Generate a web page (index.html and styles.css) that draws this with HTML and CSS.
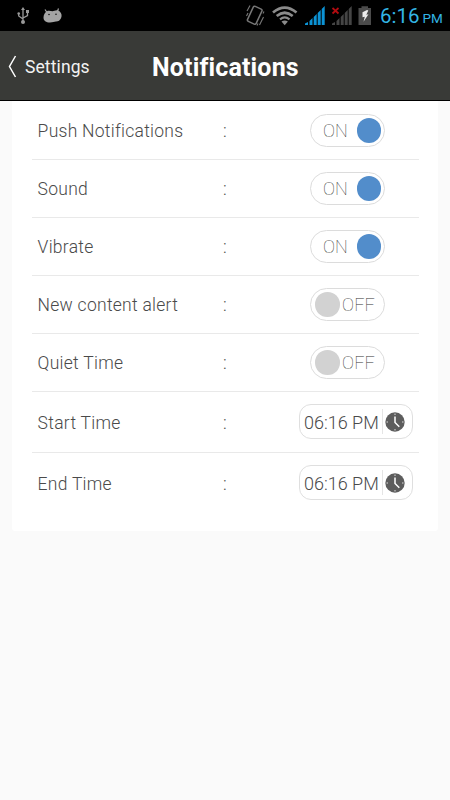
FILE: index.html
```html
<!DOCTYPE html>
<html lang="en">
<head>
<meta charset="utf-8">
<title>Notifications</title>
<link rel="stylesheet" href="styles.css">
</head>
<body>
<div class="status">
  <svg class="status-icons" width="380" height="31" viewBox="0 0 380 31">
    <g fill="none" stroke="#999" stroke-width="1.3">
      <path d="M23 9v13M18.7 13v3l4.3 3M27.5 11v4.500L23 18"/>
    </g>
    <g fill="#999"><path d="M23 7l2 3h-4z"/><circle cx="23" cy="22" r="2"/><circle cx="18.700" cy="13.500" r="1.300"/><path d="M26 10h3v3h-3z"/></g>
    <path d="M45 9.500l2 3M58.500 8.500l-1.500 4" stroke="#a4a4a4" stroke-width="1.200"/>
    <path d="M47 11.200c2-1 4 0 5.500 0s4.500-2 7 0 2.500 5 1.500 7-2.500 3.300-5 3.300c-2 0-3 1-6 1-4 0-6.500-1.500-6.500-5 0-3 1.500-5.300 3.500-6.300z" fill="#a4a4a4"/>
    <circle cx="49" cy="14.500" r=".8" fill="#111"/><circle cx="56" cy="14.200" r=".8" fill="#111"/>
    <g fill="none" stroke="#777">
      <rect x="250" y="7" width="9.500" height="16.500" rx="1.500" stroke-width="1.500" transform="rotate(25 254.700 15.200)"/>
      <path d="M247 11l3-5.500M246.500 16l1.500-3M259.500 25l4-8M257 25.500l1-2M263 13.500l1-2" stroke-width="1.100"/>
    </g>
    <g fill="none" stroke="#8b8b8b" stroke-width="2.700">
      <path d="M273 12.500Q284.700 2.700 296.500 12.500"/>
      <path d="M276.700 16Q284.700 9.500 292.700 16"/>
      <path d="M280 19.300Q284.700 15.500 289.500 19.300" stroke-width="2.200"/>
    </g>
    <path d="M281.500 21.500q3.200-2.200 6.400 0l-3.200 3.700z" fill="#8b8b8b"/>
    <path fill="#0c93d5" d="M305 25v-1.500l3-1.500v3zM309.500 25v-4l3-3v7zM313.700 25v-8l3-3v11zM317.700 25V13l3-3v15zM321.700 25V9l3-3v19z"/>
    <path fill="#454545" d="M332 25v-1.500l3-1.500v3zM336.500 25v-4l3-3v7zM340.700 25v-8l3-3v11zM344.700 25V13l3-3v15zM348.700 25V9l3-3v19z"/>
    <path d="M332.500 8l6 5.500M338.500 8l-6 5.500" stroke="#b30b10" stroke-width="1.700"/>
    <path fill="#4b4b4b" d="M358.500 8h3V6.300h6.500V8h3v17h-12.500z"/>
    <path fill="#eee" d="M367 10l-4.500 2.200v5l2.300-.4-1.300 5 5-7.500-2.200.4 2-4.200z"/>
  </svg>
  <div class="clock">6:16<span class="meridiem">PM</span></div>
</div>
<header class="header">
  <a class="back"><svg width="9" height="23" viewBox="0 0 9 23"><path d="M7.500 1L1.500 11.500L7.500 22" fill="none" stroke="#fff" stroke-width="1.500"/></svg><span class="back-text">Settings</span></a>
  <h1 class="title">Notifications</h1>
</header>
<main class="panel">
  <div class="row first"><span class="label">Push Notifications</span><span class="colon">:</span><div class="toggle"><span class="state">ON</span><i class="knob"></i></div></div>
  <div class="row"><span class="label">Sound</span><span class="colon">:</span><div class="toggle"><span class="state">ON</span><i class="knob"></i></div></div>
  <div class="row"><span class="label">Vibrate</span><span class="colon">:</span><div class="toggle"><span class="state">ON</span><i class="knob"></i></div></div>
  <div class="row"><span class="label">New content alert</span><span class="colon">:</span><div class="toggle off"><i class="knob"></i><span class="state">OFF</span></div></div>
  <div class="row"><span class="label">Quiet Time</span><span class="colon">:</span><div class="toggle off"><i class="knob"></i><span class="state">OFF</span></div></div>
  <div class="row tall"><span class="label">Start Time</span><span class="colon">:</span><div class="time"><span class="value">06:16 PM</span><svg class="dial" width="20" height="20" viewBox="0 0 20 20"><circle cx="10" cy="10" r="9.700" fill="#5d5d5d"/><path d="M10 4.500v6l4.300 4.300" fill="none" stroke="#fff" stroke-width="1.500"/><path d="M10 1.500v1.500M10 17v1.500M1.500 10H3M17 10h1.500" stroke="#ddd"/></svg></div></div>
  <div class="row tall last"><span class="label">End Time</span><span class="colon">:</span><div class="time"><span class="value">06:16 PM</span><svg class="dial" width="20" height="20" viewBox="0 0 20 20"><circle cx="10" cy="10" r="9.700" fill="#5d5d5d"/><path d="M10 4.500v6l4.300 4.300" fill="none" stroke="#fff" stroke-width="1.500"/><path d="M10 1.500v1.500M10 17v1.500M1.500 10H3M17 10h1.500" stroke="#ddd"/></svg></div></div>
</main>
</body>
</html>
```
FILE: styles.css
```css
* { box-sizing: border-box; }
body { margin: 0; width: 450px; height: 800px; overflow: hidden; background: #fafafa; font-family: Roboto, "Liberation Sans", sans-serif; }
.status { height: 31px; background: #000; display: flex; }
.status-icons { flex: none; display: block; }
.clock { color: #33b5e5; font-size: 20.5px; line-height: 32px; white-space: nowrap; letter-spacing: 0; }
.meridiem { font-size: 13.5px; margin-left: 3px; }
.header { height: 70px; background: #393a37; border-bottom: 1px solid #000; display: grid; grid-template-columns: 152px 1fr; align-items: center; color: #fff; }
.back { display: flex; align-items: center; padding-left: 8px; gap: 8px; margin-top: 1px; }
.back-text { font-size: 17.5px; letter-spacing: .1px; line-height: 24px; color: #f2f2f2; padding-top: 2px; }
.title { margin: 5px 0 0; font-size: 25px; line-height: 30px; font-weight: 700; letter-spacing: .15px; }
.panel { width: 426px; height: 430px; margin-left: 12px; padding: 0 19px 0 20px; background: #fff; border-radius: 0 0 3px 3px; }
.row { height: 58px; padding-top: 12px; border-bottom: 1px solid #e9e9e9; display: grid; grid-template-columns: 190px 77px 1fr; align-items: start; color: #484848; font-size: 17.5px; font-weight: 300; }
.first { height: 59px; padding-top: 13px; }
.tall { height: 61px; }
.last { border-bottom: 0; }
.label, .colon, .state, .value { opacity: .99; }
.label { padding-left: 5.6px; line-height: 34px; letter-spacing: .27px; white-space: nowrap; }
.colon { line-height: 35px; padding-left: 1px; }
.tall .label, .tall .colon { line-height: 38px; }
.toggle { width: 75px; height: 33px; margin-left: 11px; border: 1px solid #dcdcdc; border-radius: 17px; display: flex; align-items: center; justify-content: space-between; padding: 0 3px 0 12px; }
.off { padding: 0 9px 0 4px; }
.knob { width: 24.5px; height: 24.5px; border-radius: 50%; background: #528dcb; }
.off .knob { background: #d2d2d2; }
.state { font-size: 18px; font-weight: 100; color: #333; line-height: 31px; letter-spacing: .1px; }
.time { width: 114px; height: 35px; border: 1px solid #dfdfdf; border-radius: 12px; display: flex; align-items: center; padding-left: 4px; }
.value { width: 79px; height: 25px; line-height: 27px; border-right: 1px solid #e5e5e5; white-space: nowrap; font-size: 18px; letter-spacing: 0; }
.dial { margin-left: 2px; }
```
